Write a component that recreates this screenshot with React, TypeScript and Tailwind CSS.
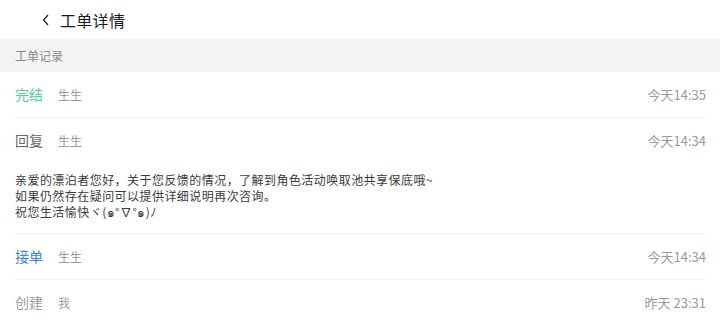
const font = { fontFamily: '"Noto Sans CJK SC", "Noto Sans", sans-serif' };

type Record = {
    status: string;
    statusColor: string;
    who: string;
    time: string;
    body?: string[];
};

const records: Record[] = [
    { status: "完结", statusColor: "text-[#4fd38c]", who: "生生", time: "今天14:35" },
    {
        status: "回复",
        statusColor: "text-[#666666]",
        who: "生生",
        time: "今天14:34",
        body: [
            "亲爱的漂泊者您好，关于您反馈的情况，了解到角色活动唤取池共享保底哦~",
            "如果仍然存在疑问可以提供详细说明再次咨询。",
            "祝您生活愉快ヾ(๑°∇°๑)ﾉ",
        ],
    },
    { status: "接单", statusColor: "text-[#3b7fe0]", who: "生生", time: "今天14:34" },
    { status: "创建", statusColor: "text-[#9a9a9a]", who: "我", time: "昨天 23:31" },
];

function Row({ r }: { r: Record }) {
    return (
        <div className="mx-[15px] border-b border-[#f1f1f3]">
            <div className="flex items-center h-[45px]">
                <span className={`text-[14px] w-[43px] ${r.statusColor}`}>{r.status}</span>
                <span className="text-[12px] text-[#9a9a9a]">{r.who}</span>
                <span className="ml-auto text-[13px] text-[#9a9a9a] mr-[-1px]">{r.time}</span>
            </div>
            {r.body && (
                <div className="pt-[9px] pb-[13px] text-[12px] leading-[16px] tracking-[0.45px] text-[#3a3a3a]">
                    {r.body.map((l) => (
                        <div key={l}>{l}</div>
                    ))}
                </div>
            )}
        </div>
    );
}

export default function App() {
    return (
        <div className="w-[720px] h-[324px] bg-white overflow-hidden" style={font}>
            <div className="h-[39px] flex items-center pl-[41px]">
                <svg width="10" height="14" viewBox="0 0 10 14" className="mr-[9px]">
                    <path d="M7 2 L2.5 7 L7 12" fill="none" stroke="#222" strokeWidth="1.3" />
                </svg>
                <span className="text-[16px] text-[#1a1a1a] tracking-[0.3px]">工单详情</span>
            </div>
            <div className="h-[33px] bg-[#f2f3f5] flex items-center px-[15px] text-[12px] text-[#8a8a8a]">
                工单记录
            </div>
            {records.map((r) => (
                <Row key={r.status} r={r} />
            ))}
        </div>
    );
}
